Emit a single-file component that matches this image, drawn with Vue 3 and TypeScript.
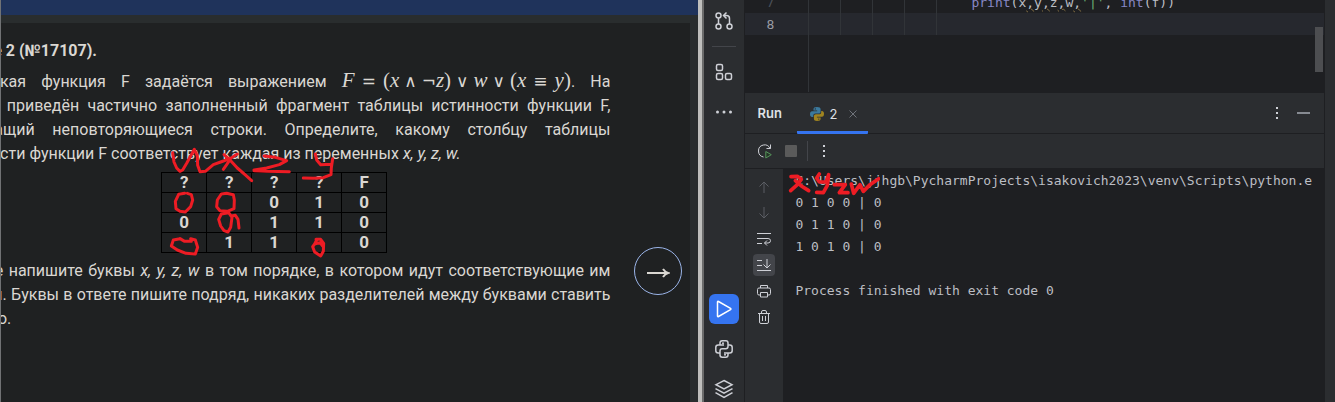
<script setup lang="ts">
interface CodeToken {
  text: string
  kind: 'call' | 'plain' | 'warn' | 'string'
}

const header: string[] = ['?', '?', '?', '?', 'F']
const rows: string[][] = [
  ['', '', '0', '1', '0'],
  ['0', '', '1', '1', '0'],
  ['', '1', '1', '', '0'],
]

const printLine: CodeToken[] = [
  { text: 'print', kind: 'call' },
  { text: '(x', kind: 'plain' },
  { text: ',', kind: 'warn' },
  { text: 'y', kind: 'plain' },
  { text: ',', kind: 'warn' },
  { text: 'z', kind: 'plain' },
  { text: ',', kind: 'warn' },
  { text: 'w', kind: 'plain' },
  { text: ',', kind: 'warn' },
  { text: "'|'", kind: 'string' },
  { text: ', ', kind: 'plain' },
  { text: 'int', kind: 'call' },
  { text: '(f))', kind: 'plain' },
]

const output: string[] = [
  'C:\\Users\\jjhgb\\PycharmProjects\\isakovich2023\\venv\\Scripts\\python.e',
  '0 1 0 0 | 0',
  '0 1 1 0 | 0',
  '1 0 1 0 | 0',
  '',
  'Process finished with exit code 0',
]
</script>

<template>
  <div class="desktop">
    <section class="browser">
      <div class="banner"></div>
      <div class="sheet">
        <article class="task">
          <h1>Задание 2 (№17107).</h1>
          <p>
            Логическая функция F задаётся выражением
            <span class="math"><i>F</i><b class="rel">=</b><span>(</span><i>x</i><b class="op">∧</b><b>¬</b><i>z</i><span>)</span><b class="op">∨</b><i>w</i><b class="op">∨</b><span>(</span><i>x</i><b class="rel">≡</b><i>y</i><span>)</span></span>. На
            рисунке&nbsp;приведён частично заполненный фрагмент таблицы истинности функции F,
            содержащий неповторяющиеся строки. Определите, какому столбцу таблицы
            истинности функции F соответствует каждая из переменных <em>x, y, z, w.</em>
          </p>
          <div class="truth">
            <table>
              <thead>
                <tr><th v-for="(cell, i) in header" :key="i" scope="col">{{ cell }}</th></tr>
              </thead>
              <tbody>
                <tr v-for="(row, r) in rows" :key="r">
                  <td v-for="(cell, c) in row" :key="c">{{ cell }}</td>
                </tr>
              </tbody>
            </table>
            <svg class="ink" viewBox="0 0 750 360" aria-hidden="true">
              <path d="M68 38 L72 66 L80 84 L90 94 L98 90 L110 70 L133 28 L142 48 L143 76 L150 95 L166 94 L190 74 L212 66 L240 56 L262 42" />
              <path d="M222 44 L240 60 L262 84 L285 104 L305 122 M238 62 L230 74 L220 88" />
              <path d="M342 48 L376 52 L410 62 L388 74 L350 84 L312 90 M312 92 L350 94 L418 95" />
              <path d="M496 42 L500 60 L512 74 L544 73 M548 56 L544 84 L543 104 L520 113 L490 115 L460 114" />
              <path d="M104 160 L86 163 L76 184 L78 206 L90 214 L106 216 L122 200 L128 180 L124 164 L112 160" />
              <path d="M214 162 L202 180 L200 200 L210 212 L232 214 L252 206 L253 180 L250 164 L230 160 L214 162" />
              <path d="M214 222 L206 238 L212 258 L222 272 L234 276 L242 262 L246 232 L236 218 L214 222 M244 228 L256 226 L264 238 L267 264" />
              <path d="M90 296 L70 300 L64 318 L82 330 L108 340 L136 342 L143 322 L136 300 L122 296 L124 304 L104 304 L90 296" />
              <path d="M500 300 L494 312 L488 320 L494 336 L512 348 L520 334 L521 310 L512 298 L498 298 M494 312 L510 308 L518 318" />
            </svg>
          </div>
          <p>
            В ответе напишите буквы <em>x, y, z, w</em> в том порядке, в котором идут соответствующие им
            столбцы. Буквы в ответе пишите подряд, никаких разделителей между буквами ставить
            не&nbsp;нужно.
          </p>
        </article>
        <button class="next" type="button" aria-label="Далее">
          <svg width="24" height="12" viewBox="0 0 24 12"><path d="M1 6H22M17 2Q19 5 22 6Q19 7 17 10" /></svg>
        </button>
      </div>
    </section>

    <div class="splitter"></div>

    <section class="ide">
      <nav class="stripe">
        <div class="group">
          <button type="button" aria-label="Pull Requests">
            <svg width="20" height="20" viewBox="0 0 20 20"><circle cx="4.5" cy="4.5" r="2.5" /><circle cx="4.5" cy="15.5" r="2.5" /><circle cx="15.5" cy="15.5" r="2.5" /><path d="M4.5 7v6M15.500 13V7.500Q15.500 4.500 12.500 4.500H10M12.500 1.500L9.500 4.500L12.500 7.500" /></svg>
          </button>
          <hr />
          <button type="button" aria-label="Structure">
            <svg width="20" height="20" viewBox="0 0 20 20"><rect x="2.500" y="2.500" width="6" height="6" rx="1.500" /><rect x="2.500" y="11.500" width="6" height="6" rx="1.500" /><rect x="11.500" y="11.500" width="6" height="6" rx="1.500" /></svg>
          </button>
          <button type="button" aria-label="More tool windows">
            <svg class="solid" width="20" height="20" viewBox="0 0 20 20"><circle cx="3.500" cy="10" r="1.500" /><circle cx="10" cy="10" r="1.500" /><circle cx="16.500" cy="10" r="1.500" /></svg>
          </button>
        </div>
        <div class="group">
          <button class="active" type="button" aria-label="Run">
            <svg width="20" height="20" viewBox="0 0 20 20"><path d="M3.500 3Q3.500 2 4.500 2.500L16.500 9.400Q17.300 10 16.500 10.600L4.500 17.500Q3.500 18 3.500 17Z" /></svg>
          </button>
          <button type="button" aria-label="Python Packages">
            <svg width="20" height="20" viewBox="0 0 20 20"><path d="M6 6V4Q6 1.800 8.200 1.800H11.800Q14 1.800 14 4V7.600Q14 9.800 11.800 9.800H8.200Q6 9.800 6 12V14H4.200Q1.800 14 1.800 11.500V8.500Q1.800 6 4.200 6H10M14 6H15.800Q18.200 6 18.200 8.500V11.500Q18.200 14 15.800 14H10M14 14V16Q14 18.200 11.800 18.200H8.200Q6 18.200 6 16V14" /><circle class="eye" cx="9" cy="4.200" r="1" /><circle class="eye" cx="11" cy="15.800" r="1" /></svg>
          </button>
          <button type="button" aria-label="Layers">
            <svg width="20" height="20" viewBox="0 0 20 20"><path d="M10 1.500L18 5.700L10 10L2 5.700ZM1.500 9.700L10 14.200L18.500 9.700M1.500 13.700L10 18.300L18.500 13.700" /></svg>
          </button>
        </div>
      </nav>

      <main class="work">
        <div class="editor">
          <div class="line dim">
            <span class="num">7</span>
            <span class="guides"><i></i><i></i><i></i><i></i><i></i></span>
            <code><span v-for="(t, i) in printLine" :key="i" :class="t.kind">{{ t.text }}</span></code>
          </div>
          <div class="line current">
            <span class="num">8</span>
            <span class="guides"><i></i><i></i><i></i><i></i><i></i></span>
          </div>
          <div class="line rest">
            <span class="num"></span>
            <span class="guides"><i></i></span>
          </div>
          <div class="thumb"></div>
        </div>

        <header class="tabs">
          <h2>Run</h2>
          <div class="tab">
            <svg width="16" height="16" viewBox="0 0 16 16" aria-hidden="true">
              <path fill="#3b7a9e" d="M8 1C5.500 1 4.500 1.800 4.500 3.200V4.500H8.200V5.200H3.200C1.700 5.200 1 6.400 1 8.200C1 10 1.900 11 3 11H4.300V9.500C4.300 8.300 5.200 7.500 6.500 7.500H9.700C10.900 7.500 11.600 6.700 11.600 5.700V3.200C11.600 1.700 10.400 1 8 1ZM6.300 2.200A.7.7 0 1 1 6.300 3.600A.7.7 0 1 1 6.300 2.200Z" />
              <path fill="#a08420" d="M8 15C10.500 15 11.600 14.200 11.600 12.800V11.500H7.900V10.800H12.900C14.400 10.800 15 9.600 15 7.800C15 6 14.100 5 13 5H12.200V6.200C12.200 7.500 11.300 8.300 10 8.300H6.800C5.700 8.300 4.900 9.100 4.900 10.200V12.800C4.900 14.300 6 15 8 15ZM9.800 13.800A.7.7 0 1 1 9.800 12.400A.7.7 0 1 1 9.800 13.800Z" />
            </svg>
            <span>2</span>
            <button type="button" aria-label="Close tab">
              <svg width="10" height="10" viewBox="0 0 10 10"><path d="M1.500 1.500L8.500 8.500M8.500 1.500L1.500 8.500" /></svg>
            </button>
          </div>
          <div class="tools">
            <button type="button" aria-label="Options"><svg class="solid" width="16" height="16" viewBox="0 0 16 16"><path d="M7 2h2v2H7zM7 7h2v2H7zM7 12h2v2H7z" /></svg></button>
            <button type="button" aria-label="Hide"><svg class="soft" width="16" height="16" viewBox="0 0 16 16"><path d="M2 8H15" /></svg></button>
          </div>
        </header>

        <div class="toolbar">
          <button type="button" aria-label="Rerun">
            <svg width="16" height="16" viewBox="0 0 16 16"><path d="M6.500 14Q1.500 13 1.500 8A6 6 0 0 1 13 5.500M13.500 1.500V5.500H9.500" /><path class="go" d="M8.800 8.500V15L14.300 11.700Z" /></svg>
          </button>
          <button type="button" aria-label="Stop" disabled><span class="stop"></span></button>
          <span class="bar"></span>
          <button type="button" aria-label="More"><svg class="solid" width="16" height="16" viewBox="0 0 16 16"><path d="M7 2h2v2H7zM7 7h2v2H7zM7 12h2v2H7z" /></svg></button>
        </div>

        <div class="console">
          <div class="gutter">
            <button class="off" type="button" aria-label="Up"><svg width="16" height="16" viewBox="0 0 16 16"><path d="M8 14V3M3.500 7.500L8 3L12.500 7.500" /></svg></button>
            <button class="off" type="button" aria-label="Down"><svg width="16" height="16" viewBox="0 0 16 16"><path d="M8 2V13M3.500 8.500L8 13L12.500 8.500" /></svg></button>
            <button type="button" aria-label="Soft-wrap"><svg width="16" height="16" viewBox="0 0 16 16"><path d="M1 2.500H15M1 7.500H12Q14.500 7.500 14.500 9.700Q14.500 12 12 12H8.500M11 9.500L8.500 12L11 14.500M1 12.500H6" /></svg></button>
            <button class="on" type="button" aria-label="Scroll to end"><svg width="16" height="16" viewBox="0 0 16 16"><path d="M1 3.500H6M1 8.500H6M1 13.500H15M11 2V11M7.500 7.500L11 11L14.500 7.500" /></svg></button>
            <button type="button" aria-label="Print"><svg width="16" height="16" viewBox="0 0 16 16"><path d="M4.500 5V2.500H11.500V5M4.500 12H3Q1.500 12 1.500 10.500V6.500Q1.500 5 3 5H13Q14.500 5 14.500 6.500V10.500Q14.500 12 13 12H11.500M4.500 9.500H11.500V14H4.500Z" /></svg></button>
            <button type="button" aria-label="Clear all"><svg width="16" height="16" viewBox="0 0 16 16"><path d="M2 4.500H14M5.500 4.500V3Q5.500 1.500 7 1.500H9Q10.500 1.500 10.500 3V4.500M3.500 4.500V13Q3.500 14.500 5 14.500H11Q12.500 14.500 12.500 13V4.500M6.500 7V12M9.500 7V12" /></svg></button>
          </div>
          <div class="output">
            <pre><template v-for="(text, i) in output" :key="i">{{ text + '\n' }}</template></pre>
            <svg class="ink" viewBox="0 0 300 120" aria-hidden="true">
              <path d="M33 50 L52 49 L64 58 L52 74 L32 92 M46 62 L64 78 L86 92" />
              <path d="M118 42 L110 54 L118 66 L138 66 L146 44 L142 76 L130 98 L110 97" />
              <path d="M163 74 L196 74 L178 98 L204 98" />
              <path d="M214 72 L221 100 L240 74 L250 94 L270 74 L296 56" />
            </svg>
          </div>
        </div>
      </main>
      <aside class="edge"></aside>
    </section>
  </div>
</template>

<style>
body {
  margin: 0;
  background: #1e1f22;
}
</style>

<style scoped>
* {
  box-sizing: border-box;
}
.desktop {
  display: flex;
  height: 100vh;
  overflow: hidden;
}
button {
  display: flex;
  align-items: center;
  justify-content: center;
  padding: 0;
  border: 0;
  background: none;
  color: inherit;
}
svg {
  display: block;
  fill: none;
  stroke: currentColor;
}
svg.solid {
  fill: currentColor;
  stroke: none;
}

/* Task page */
.browser {
  flex: 698;
  min-width: 0;
  display: flex;
  flex-direction: column;
  border-left: 1px solid #707274;
  background: #292d2e;
  overflow: hidden;
}
.banner {
  height: 15px;
  background: #1f335b;
}
.sheet {
  position: relative;
  flex: 1;
  margin: 8px 8px 0 0;
  background: #1f2122;
}
.task {
  margin: 0 80px 0 -63px;
  padding-top: 16px;
  color: #dad7d2;
  font: 16px/24px Roboto, "Liberation Sans", sans-serif;
}
.task h1 {
  margin: 0 0 6px;
  font-size: 16px;
  font-weight: 700;
}
.task p {
  margin: 0;
  text-align: justify;
}
.math {
  white-space: nowrap;
  font: 21px/22px "Liberation Serif", serif;
}
.math b {
  font-family: "DejaVu Sans", sans-serif;
  font-size: 17px;
  font-weight: 400;
}
.math .rel {
  margin: 0 7px;
}
.math .op {
  margin: 0 5px;
}
.truth {
  position: relative;
  width: max-content;
  margin: 6px auto;
}
table {
  border-collapse: collapse;
}
th,
td {
  width: 45px;
  height: 20px;
  padding: 0;
  border: 1px solid #000;
  font-size: 17px;
  line-height: 19px;
  font-weight: 700;
  text-align: center;
}
.ink {
  position: absolute;
  stroke: #ed1c24;
  stroke-linecap: round;
  stroke-linejoin: round;
  pointer-events: none;
}
.truth .ink {
  left: -11px;
  top: -32px;
  width: 250px;
  height: 120px;
  stroke-width: 9;
}
.next {
  position: absolute;
  right: 8px;
  top: 224px;
  width: 48px;
  height: 48px;
  border: 1px solid #9ab4e8;
  border-radius: 50%;
  color: #dad7d2;
}
.next svg {
  margin-top: 4px;
  stroke-width: 2;
}
.splitter {
  width: 6px;
  border-right: 2px solid #6c6c6c;
  background: #bfbfbd;
}

/* IDE */
.ide {
  flex: 631;
  min-width: 0;
  display: flex;
  background: #2b2d30;
  color: #ced0d6;
  font: 13px/20px Inter, "Open Sans", sans-serif;
}
.stripe {
  width: 41px;
  display: flex;
  flex-direction: column;
  justify-content: space-between;
  border-right: 1px solid #1e1f22;
  padding: 6px 0 0;
}
.group {
  display: flex;
  flex-direction: column;
  align-items: center;
  gap: 10px;
}
.group:last-child {
  margin-bottom: -2px;
}
.stripe button {
  width: 30px;
  height: 30px;
  border-radius: 6px;
}
.stripe svg {
  stroke-width: 1.5;
}
.stripe .eye {
  fill: currentColor;
  stroke: none;
}
.stripe .active {
  background: #3574f0;
  color: #fff;
}
.stripe hr {
  width: 24px;
  height: 1px;
  margin: 0;
  border: 0;
  background: #43454a;
}
.work {
  flex: 1;
  min-width: 0;
  display: flex;
  flex-direction: column;
}
.edge {
  width: 11px;
  border-left: 1px solid #1e1f22;
}
.editor {
  position: relative;
  height: 93px;
  overflow: hidden;
  background: #1e1f22;
  font: 13px/24px "DejaVu Sans Mono", monospace;
}
.line {
  display: flex;
  height: 22px;
}
.line.dim {
  margin-top: -9px;
}
.line.current {
  background: #26282e;
}
.line.rest {
  height: 57px;
}
.num {
  width: 63px;
  padding-left: 21px;
  color: #9a9da5;
}
.dim .num {
  color: #4b5059;
}
.guides {
  display: flex;
  width: 163px;
  gap: 31px;
}
.guides i {
  width: 1px;
  background: #313438;
}
code {
  font: inherit;
  color: #bcbec4;
  white-space: pre;
}
.call {
  color: #8888c6;
}
.string {
  color: #6aab73;
}
.warn {
  text-decoration: underline wavy #857042 1px;
}
.thumb {
  position: absolute;
  right: 1px;
  top: 27px;
  width: 8px;
  height: 45px;
  background: #4d4e51;
}
.tabs {
  height: 41px;
  display: flex;
  align-items: stretch;
  border-bottom: 1px solid #1e1f22;
}
.tabs h2 {
  width: 52px;
  margin: 0;
  padding-left: 12px;
  font-size: 13px;
  font-weight: 600;
  line-height: 41px;
  color: #dfe1e5;
}
.tab {
  display: flex;
  align-items: center;
  width: 71px;
  padding-left: 12px;
  gap: 4px;
  margin-bottom: -1px;
  border-bottom: 3px solid #3574f0;
  border-radius: 1px;
  padding-top: 3px;
  color: #dfe1e5;
}
.tab > svg {
  stroke: none;
}
.tab button {
  margin-left: 7px;
  color: #6f737a;
}
.tools {
  display: flex;
  gap: 10px;
  margin-left: auto;
  padding-right: 13px;
}
.soft {
  stroke-width: 2;
  color: #868a91;
}
.toolbar {
  height: 34px;
  display: flex;
  align-items: center;
  gap: 8px;
  padding-left: 12px;
}
.toolbar button {
  width: 16px;
}
.toolbar button:first-child {
  margin-right: 2px;
}
.stop {
  width: 12px;
  height: 12px;
  border-radius: 1px;
  background: #5a5a5a;
}
.go {
  fill: #253627;
  stroke: #57965c;
}
.bar {
  width: 1px;
  height: 20px;
  background: #43454a;
}
.console {
  flex: 1;
  display: flex;
  min-height: 0;
  border-top: 1px solid #1e1f22;
  background: #1e1f22;
}
.gutter {
  width: 38px;
  display: flex;
  flex-direction: column;
  align-items: center;
  gap: 4px;
  padding-top: 7px;
  background: #2b2d30;
}
.gutter button {
  width: 22px;
  height: 22px;
  border-radius: 4px;
}
.gutter .off {
  color: #5a5d63;
}
.gutter .on {
  background: #43454a;
}
.output {
  position: relative;
  flex: 1;
  min-width: 0;
  overflow: hidden;
}
pre {
  margin: 0;
  padding: 1px 0 0 12px;
  color: #bcbec4;
  font: 13px/22px "DejaVu Sans Mono", monospace;
}
.output .ink {
  left: -3px;
  top: -9px;
  width: 100px;
  height: 40px;
  stroke-width: 11;
}
</style>
